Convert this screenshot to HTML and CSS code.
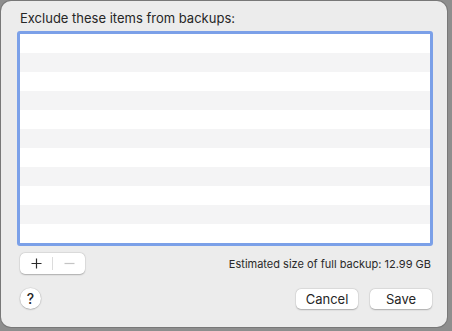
FILE: index.html
```html
<!DOCTYPE html>
<html lang="en">
<head>
    <meta charset="UTF-8">
    <title>Exclude from backups</title>
    <link rel="stylesheet" href="styles.css">
</head>
<body>
    <div class="sheet">
        <div class="title">Exclude these items from backups:</div>

        <div class="list">
            <div class="row"></div>
            <div class="row"></div>
            <div class="row"></div>
            <div class="row"></div>
            <div class="row"></div>
            <div class="row"></div>
            <div class="row"></div>
            <div class="row"></div>
            <div class="row"></div>
            <div class="row"></div>
            <div class="row"></div>
        </div>

        <div class="list-footer">
            <div class="segmented">
                <button class="seg-btn">
                    <svg width="11" height="11" viewBox="0 0 11 11"><path d="M5.5 0.5v10M0.5 5.5h10" stroke="#2b2b2b" stroke-width="1.2" fill="none"/></svg>
                </button>
                <span class="seg-divider"></span>
                <button class="seg-btn" disabled>
                    <svg width="11" height="11" viewBox="0 0 11 11"><path d="M0.5 5.5h10" stroke="#c4c4c4" stroke-width="1.2" fill="none"/></svg>
                </button>
            </div>
            <div class="estimate">Estimated size of full backup: 12.99 GB</div>
        </div>

        <div class="actions">
            <button class="help">?</button>
            <div class="buttons">
                <button class="push">Cancel</button>
                <button class="push">Save</button>
            </div>
        </div>
    </div>
</body>
</html>
```

FILE: styles.css
```css
* {
    box-sizing: border-box;
}
body {
    margin: 0;
    width: 452px;
    height: 331px;
    overflow: hidden;
    background: #8e8e8e;
    font-family: Inter, "Liberation Sans", sans-serif;
    color: #262626;
}
.sheet {
    margin: 1px 0 0 1px;
    width: 446px;
    height: 326px;
    padding: 9px 14px 0 16px;
    background: #ececec;
    border-radius: 10px;
    box-shadow: 0 0 0 1px rgba(0,0,0,0.15);
    display: flex;
    flex-direction: column;
}
.title {
    font-size: 13px;
    line-height: 16px;
    padding-left: 3px;
}
.list {
    margin-top: 5px;
    border: 3px solid #7ba0e8;
    border-radius: 3px;
    background: #fff;
}
.row {
    height: 19px;
}
.row:nth-child(even) {
    background: #f4f4f5;
}
.list-footer {
    display: flex;
    align-items: center;
    justify-content: space-between;
    margin-top: 7px;
    padding: 0 0 0 3px;
}
.segmented {
    display: flex;
    align-items: center;
    height: 21px;
    width: 65px;
    background: #fff;
    border-radius: 5px;
    box-shadow: 0 0.5px 1.5px rgba(0,0,0,0.25), 0 0 0 0.5px rgba(0,0,0,0.06);
}
.seg-btn {
    flex: 1;
    height: 100%;
    border: none;
    background: none;
    padding: 0;
    display: flex;
    align-items: center;
    justify-content: center;
}
.seg-divider {
    width: 1px;
    height: 13px;
    background: #dcdcdc;
}
.estimate {
    font-size: 11px;
    line-height: 14px;
    color: #2a2a2a;
    padding-right: 2px;
}
.actions {
    display: flex;
    align-items: center;
    justify-content: space-between;
    margin-top: 14px;
    padding-left: 3px;
}
.help {
    width: 21px;
    height: 21px;
    border-radius: 50%;
    border: none;
    padding: 0;
    background: #fff;
    box-shadow: 0 0.5px 1.5px rgba(0,0,0,0.3), 0 0 0 0.5px rgba(0,0,0,0.06);
    font-family: Inter, "Liberation Sans", sans-serif;
    font-size: 14px;
    font-weight: 500;
    color: #262626;
}
.buttons {
    display: flex;
    gap: 12px;
    padding-right: 1px;
}
.push {
    width: 62px;
    height: 20px;
    border: none;
    padding: 0;
    border-radius: 5px;
    background: #fff;
    box-shadow: 0 0.5px 1.5px rgba(0,0,0,0.25), 0 0 0 0.5px rgba(0,0,0,0.06);
    font-family: Inter, "Liberation Sans", sans-serif;
    font-size: 13px;
    color: #262626;
}
```
